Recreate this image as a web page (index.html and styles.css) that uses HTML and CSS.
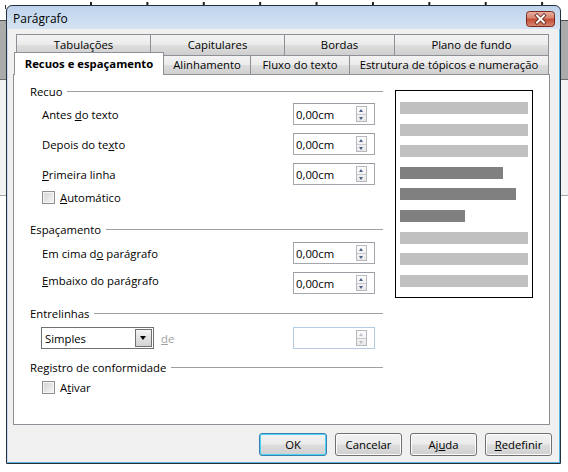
FILE: index.html
```html
<!DOCTYPE html>
<html lang="pt">
<head>
<meta charset="utf-8">
<title>Parágrafo</title>
<link rel="stylesheet" href="styles.css">
</head>
<body>
<div class="desk">
  <div class="ruler"></div>
  <div class="tick"></div>
  <div class="side side-left"></div>
  <div class="side side-right"></div>
  <div class="window">
    <div class="titlebar">
      <span class="title">Parágrafo</span>
      <span class="close">
        <svg width="29" height="16" viewBox="0 0 29 16">
          <defs>
            <linearGradient id="cg" x1="0" y1="0" x2="0" y2="1">
              <stop offset="0" stop-color="#e9b1a4"/>
              <stop offset="0.45" stop-color="#d7826d"/>
              <stop offset="0.5" stop-color="#c24a30"/>
              <stop offset="1" stop-color="#d88a74"/>
            </linearGradient>
          </defs>
          <rect x="0.5" y="0.5" width="28" height="15" rx="3" fill="url(#cg)" stroke="#7a2a1c"/>
          <path d="M11 4.5 L18 11.5 M18 4.5 L11 11.5" stroke="#5a1d12" stroke-width="3.6" stroke-linecap="square"/>
          <path d="M11 4.5 L18 11.5 M18 4.5 L11 11.5" stroke="#ffffff" stroke-width="2" stroke-linecap="square"/>
        </svg>
      </span>
    </div>
    <div class="client">
      <div class="tabs">
        <div class="tabrow back">
          <div class="tab t-tab">Tabulações</div>
          <div class="tab t-cap">Capitulares</div>
          <div class="tab t-bor">Bordas</div>
          <div class="tab t-pla">Plano de fundo</div>
        </div>
        <div class="tabrow front">
          <div class="tab t-rec selected">Recuos e espaçamento</div>
          <div class="tab t-ali">Alinhamento</div>
          <div class="tab t-flu">Fluxo do texto</div>
          <div class="tab t-est">Estrutura de tópicos e numeração</div>
        </div>
      </div>
      <div class="page">
        <div class="form">
          <div class="heading h-recuo"><span>Recuo</span><i></i></div>
          <div class="row r1"><span class="label">Antes <u>d</u>o texto</span><span class="field"><span class="val">0,00cm</span><span class="spin"><b class="up"></b><b class="down"></b></span></span></div>
          <div class="row r2"><span class="label">Depois do te<u>x</u>to</span><span class="field"><span class="val">0,00cm</span><span class="spin"><b class="up"></b><b class="down"></b></span></span></div>
          <div class="row r2"><span class="label"><u>P</u>rimeira linha</span><span class="field"><span class="val">0,00cm</span><span class="spin"><b class="up"></b><b class="down"></b></span></span></div>
          <div class="check c1"><span class="box"></span><span><u>A</u>utomático</span></div>

          <div class="heading h-esp"><span>Espaçamento</span><i></i></div>
          <div class="row r3"><span class="label">Em cima d<u>o</u> parágrafo</span><span class="field"><span class="val">0,00cm</span><span class="spin"><b class="up"></b><b class="down"></b></span></span></div>
          <div class="row r2"><span class="label raised"><u>E</u>mbaixo do parágrafo</span><span class="field"><span class="val">0,00cm</span><span class="spin"><b class="up"></b><b class="down"></b></span></span></div>

          <div class="heading h-ent"><span>Entrelinhas</span><i></i></div>
          <div class="row r4">
            <span class="combo"><span class="val">Simples</span><span class="drop"></span></span>
            <span class="de"><u>d</u>e</span>
            <span class="field disabled"><span class="val"></span><span class="spin"><b class="up"></b><b class="down"></b></span></span>
          </div>

          <div class="heading h-reg"><span>Registro de conformidade</span><i></i></div>
          <div class="check c2"><span class="box"></span><span>A<u>t</u>ivar</span></div>
        </div>
        <div class="preview">
          <div class="bar light"></div>
          <div class="bar light"></div>
          <div class="bar light"></div>
          <div class="bar dark" style="width:103px"></div>
          <div class="bar dark" style="width:116px"></div>
          <div class="bar dark" style="width:65px"></div>
          <div class="bar light"></div>
          <div class="bar light"></div>
          <div class="bar light"></div>
        </div>
      </div>
      <div class="buttons">
        <span class="btn default">OK</span>
        <span class="btn">Cancelar</span>
        <span class="btn">Aj<u>u</u>da</span>
        <span class="btn"><u>R</u>edefinir</span>
      </div>
    </div>
  </div>
</div>
</body>
</html>
```

FILE: styles.css
```css
* { box-sizing: border-box; }
html, body { margin: 0; padding: 0; }
body {
  width: 568px;
  height: 472px;
  overflow: hidden;
  background: #ffffff;
  font-family: "Open Sans", "Noto Sans", sans-serif;
  font-size: 11.3px;
  color: #000;
}
u { text-decoration: underline; text-underline-offset: 1px; }

.desk { position: relative; width: 568px; height: 472px; }
.ruler {
  position: absolute;
  top: 2px;
  left: 90px;
  width: 478px;
  height: 3px;
  background-image: linear-gradient(90deg, #1e1e1e 0 2px, transparent 2px);
  background-size: 56.4px 3px;
  background-repeat: repeat-x;
}
.tick { position: absolute; left: 5px; top: 5px; width: 1px; height: 4px; background: #333; }
.side {
  position: absolute;
  top: 20px;
  width: 6px;
  height: 177px;
  background: linear-gradient(#4e4e4e 0 1px, #ababab 1px 59px, #6e6e6e 59px 60px, #f2f2f2 60px 175px, #a8a8a8 175px 176px, #ffffff 176px);
}
.side-left { left: 0; }
.side-right { right: 0; width: 7px; }

.window {
  position: absolute;
  left: 6px;
  top: 5px;
  width: 555px;
  height: 459px;
  border: 1px solid #26303c;
  border-radius: 6px 6px 0 0;
  background: linear-gradient(#bed3ec, #d6e4f3 24px);
  display: flex;
  flex-direction: column;
}
.titlebar {
  height: 23px;
  flex: none;
  display: flex;
  align-items: center;
  justify-content: space-between;
  padding: 0 5px 0 6px;
}
.title { font-size: 12px; padding-top: 1px; }
.close { display: block; width: 29px; height: 16px; margin-top: 3px; }
.close svg { display: block; }

.client {
  flex: 1;
  background: #f0f0f0;
  border: 1px solid #5ab2dc;
  border-top: none;
  border-left-color: #c9dbee;
  padding: 5px 7px 0 5px;
  display: flex;
  flex-direction: column;
}

.tabs { display: flex; flex-direction: column; height: 41px; margin-left: 1px; position: relative; z-index: 2; flex: none; }
.tabrow { display: flex; align-items: flex-start; }
.tabrow.back { padding-left: 2px; height: 21px; }
.tabrow.front { padding-left: 2px; height: 20px; }
.tab {
  height: 21px;
  line-height: 19px;
  text-align: center;
  border: 1px solid #8e9097;
  border-bottom: none;
  margin-right: -1px;
  background: linear-gradient(#f3f3f3, #ebebeb 48%, #dddddd 52%, #cfcfcf);
  white-space: nowrap;
}
.front .tab { height: 19px; line-height: 18px; }
.t-tab { width: 135px; }
.t-cap { width: 135px; }
.t-bor { width: 111px; }
.t-pla { width: 155px; }
.t-rec { width: 150px; }
.t-ali { width: 88px; }
.t-flu { width: 100px; }
.t-est { width: 200px; }
.front .tab.selected {
  background: #ffffff;
  height: 23px;
  margin-top: -3px;
  margin-left: -2px;
  margin-right: -1px;
  line-height: 21px;
  font-weight: 700;
  position: relative;
  z-index: 3;
}

.page {
  width: 537px;
  height: 351px;
  margin-top: -1px;
  background: #ffffff;
  border: 1px solid #8e9097;
  display: flex;
  padding: 8px 16px 0 16px;
  gap: 12px;
  flex: none;
}
.form { width: 353px; display: flex; flex-direction: column; }

.heading { display: flex; align-items: center; height: 16px; flex: none; }
.heading i { flex: 1; height: 1px; background: #a0a0a0; margin-left: 5px; }
.h-esp { margin-top: 16px; }
.h-ent { margin-top: 11px; }
.h-reg { margin-top: 10px; }

.row { display: flex; align-items: center; height: 22px; padding-left: 12px; flex: none; }
.row .label { flex: 1; }
.row .label.raised { margin-bottom: 6px; }
.r1 { margin-top: 4px; }
.r2 { margin-top: 8px; }
.r3 { margin-top: 5px; }
.r4 { margin-top: 6px; padding-left: 11px; }

.field {
  width: 82px;
  height: 22px;
  margin-right: 8px;
  border: 1px solid #a3a6ad;
  border-top-color: #9a9da4;
  background: #fff;
  display: flex;
  align-items: center;
  padding-left: 2px;
}
.field .val { flex: 1; }
.field.disabled { border-color: #b3cbe4; margin-left: auto; }
.spin {
  display: flex;
  flex-direction: column;
  width: 11px;
  height: 16px;
  margin-right: 7px;
  border: 1px solid #b7b9bf;
  background: linear-gradient(#fcfcfc, #e9e9e9);
}
.spin b { flex: 1; position: relative; display: block; }
.spin .down { border-top: 1px solid #c9cbd0; }
.spin b::after {
  content: "";
  position: absolute;
  left: 2px;
  top: 2px;
  border-left: 2.5px solid transparent;
  border-right: 2.5px solid transparent;
}
.spin .up::after { border-bottom: 3px solid #4c5f86; }
.spin .down::after { border-top: 3px solid #4c5f86; top: 2px; }
.disabled .spin b::after { opacity: 0.35; }

.check { display: flex; align-items: center; height: 16px; padding-left: 12px; gap: 5px; flex: none; }
.c1 { margin-top: 4px; }
.c2 { margin-top: 4px; }
.box {
  width: 13px;
  height: 13px;
  border: 1px solid #8f8f8f;
  background: linear-gradient(135deg, #d4d4d4, #f6f6f6);
  box-shadow: inset 0 0 0 1px #f4f4f4;
}

.combo {
  width: 113px;
  height: 22px;
  border: 1px solid #707070;
  background: #fff;
  display: flex;
  align-items: center;
  padding: 1px 1px 1px 3px;
}
.combo .val { flex: 1; }
.drop {
  width: 17px;
  height: 18px;
  border: 1px solid #6f6f6f;
  background: linear-gradient(#f4f4f4, #e2e2e2 50%, #d3d3d3);
  position: relative;
}
.drop::after {
  content: "";
  position: absolute;
  left: 4px;
  top: 6px;
  border-left: 3.5px solid transparent;
  border-right: 3.5px solid transparent;
  border-top: 4px solid #000;
}
.de { color: #a0a0a0; margin-left: 7px; }

.preview {
  width: 138px;
  height: 208px;
  margin-top: 7px;
  border: 1px solid #000;
  padding: 11px 4px;
  display: flex;
  flex-direction: column;
  gap: 9.6px;
  flex: none;
}
.bar { height: 12px; flex: none; }
.bar.light { background: #c0c0c0; width: 128px; }
.bar.dark { background: #808080; }

.buttons { display: flex; justify-content: flex-end; gap: 8px; margin-top: 8px; flex: none; }
.btn {
  width: 67px;
  height: 23px;
  border: 1px solid #707070;
  border-radius: 3px;
  background: linear-gradient(#f2f2f2, #ebebeb 48%, #dddddd 52%, #cfcfcf);
  box-shadow: inset 0 0 0 1px #fcfcfc;
  display: flex;
  align-items: center;
  justify-content: center;
}
.btn.default { border-color: #3c7fb1; box-shadow: inset 0 0 0 1px #48d5f5; width: 68px; }
```
